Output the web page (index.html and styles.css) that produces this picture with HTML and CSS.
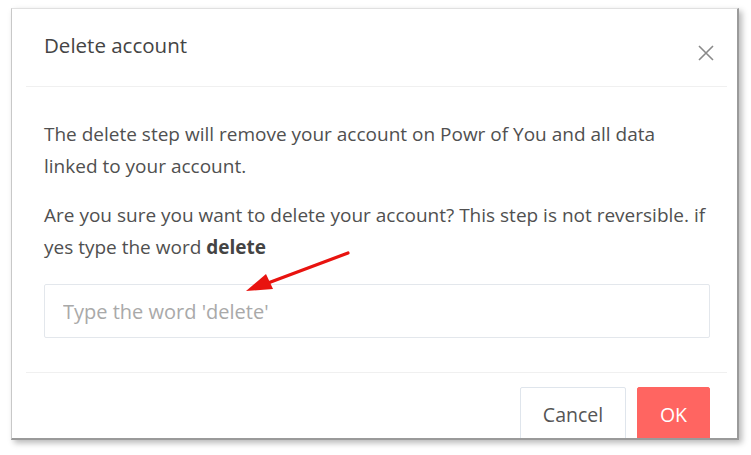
FILE: index.html
```html
<!DOCTYPE html>
<html>
<head>
<meta charset="utf-8">
<link rel="stylesheet" href="styles.css">
</head>
<body>
<div class="frame">
  <div class="dialog">
    <div class="header">
      <h1 class="title">Delete account</h1>
      <span class="close" aria-label="Close">
        <svg width="16" height="16" viewBox="0 0 16 16"><path d="M1 1 L15 15 M15 1 L1 15" stroke="#8a8a8a" stroke-width="1.6" fill="none"/></svg>
      </span>
    </div>
    <div class="body">
      <p class="text">The delete step will remove your account on Powr of You and all data linked to your account.</p>
      <p class="text">Are you sure you want to delete your account? This step is not reversible. if yes type the word <b>delete</b></p>
      <input class="field" type="text" placeholder="Type the word 'delete'">
    </div>
    <div class="footer">
      <button class="btn cancel">Cancel</button>
      <button class="btn ok">OK</button>
    </div>
  </div>
  <svg class="arrow" width="751" height="455" viewBox="0 0 751 455">
    <line x1="348" y1="253" x2="268" y2="283" stroke="#e8130f" stroke-width="3.2" stroke-linecap="round"/>
    <polygon points="246,291 266,274 273,289" fill="#e8130f"/>
  </svg>
</div>
</body>
</html>
```

FILE: styles.css
```css
* { box-sizing: border-box; }
html, body { margin: 0; padding: 0; background: #ffffff; }
body { width: 751px; height: 455px; position: relative; font-family: "Open Sans", "Noto Sans", sans-serif; }

.frame {
  margin: 8px 0 0 11px;
  width: 728px;
  height: 432px;
  background: #fff;
  border-left: 1px solid #c8c8c8;
  border-top: 1px solid #e0e0e0;
  border-right: 2px solid #9a9a9a;
  border-bottom: 2px solid #9a9a9a;
  box-shadow: 3px 3px 6px rgba(0,0,0,0.28);
  overflow: hidden;
}

.dialog {
  margin: 0 10px 0 14px;
}

.header {
  display: flex;
  justify-content: space-between;
  align-items: flex-start;
  height: 78px;
  padding: 22px 13px 0 18px;
  border-bottom: 1px solid #f0f0f0;
}
.title {
  margin: 0;
  font-size: 20.5px;
  font-weight: 400;
  line-height: 28px;
  color: #444;
}
.close { display: block; width: 16px; height: 16px; margin-top: 14px; }
.close svg { display: block; }

.body { padding: 31px 17px 34px 18px; }
.text {
  margin: 0 0 17px;
  font-size: 19px;
  line-height: 32px;
  color: #505050;
}
.text b { font-weight: 700; color: #444; }

.field {
  display: block;
  width: 100%;
  height: 54px;
  margin-top: 21px;
  padding: 0 18px;
  border: 1px solid #e3e7ec;
  border-radius: 2px;
  font-family: inherit;
  font-size: 20px;
  color: #444;
  outline: none;
}
.field::placeholder { color: #a9a9a9; }

.footer {
  display: flex;
  justify-content: flex-end;
  gap: 11px;
  padding: 14px 17px 0 0;
  border-top: 1px solid #f0f0f0;
}
.btn {
  height: 54px;
  border-radius: 2px;
  font-family: inherit;
  font-size: 19.5px;
  cursor: pointer;
}
.cancel {
  width: 106px;
  background: #fff;
  border: 1px solid #dfe5ec;
  color: #555;
}
.ok {
  width: 73px;
  background: #ff6561;
  border: 1px solid #ff6561;
  color: #fff;
}

.arrow { position: absolute; left: 0; top: 0; pointer-events: none; }
```
